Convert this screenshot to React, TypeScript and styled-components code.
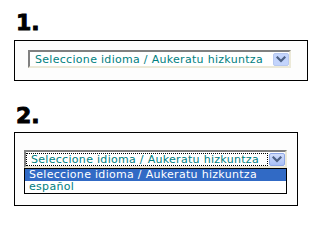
import React from 'react';
import styled, { createGlobalStyle } from 'styled-components';

const GlobalStyle = createGlobalStyle`
  body {
    margin: 0;
    background: #ffffff;
    font-family: 'DejaVu Sans', Verdana, sans-serif;
  }
`;

const Page = styled.main`
  padding: 12px 0 0 14px;
`;

const StepTitle = styled.h2<{ $first?: boolean }>`
  margin: ${(p) => (p.$first ? '0' : '24px')} 0 ${(p) => (p.$first ? '6px' : '5px')} 2px;
  font-size: 22px;
  line-height: 22px;
  font-weight: 700;
  color: #000000;
  -webkit-text-stroke: 0.9px #000000;
`;

const Frame = styled.section<{ $width: number; $padding: string }>`
  box-sizing: border-box;
  width: ${(p) => p.$width}px;
  padding: ${(p) => p.$padding};
  border: 1px solid #000000;
  background: #fdfdfd;
`;

const SelectBox = styled.div`
  box-sizing: border-box;
  display: flex;
  align-items: center;
  width: 263px;
  height: 18px;
  border-top: 2px solid #808080;
  border-left: 2px solid #808080;
  border-right: 2px solid #ece9d8;
  border-bottom: 2px solid #ece9d8;
  background: #ffffff;
`;

const Value = styled.div<{ $focused?: boolean }>`
  box-sizing: border-box;
  flex: 1;
  height: 13px;
  padding-left: 4px;
  border: 1px dotted ${(p) => (p.$focused ? '#000000' : 'transparent')};
  font-size: 11px;
  line-height: 11px;
  letter-spacing: 0.3px;
  color: #008080;
  white-space: nowrap;
  overflow: hidden;
`;

const ArrowButton = styled.span<{ $hover?: boolean }>`
  box-sizing: border-box;
  display: flex;
  align-items: center;
  justify-content: center;
  width: 16px;
  height: 13px;
  margin: 0 0 0 1px;
  border: 1px solid ${(p) => (p.$hover ? '#8ea7e6' : '#b7c8f0')};
  border-radius: 2px;
  background: ${(p) =>
    p.$hover
      ? 'linear-gradient(180deg, #d2defc 0%, #a8bff7 100%)'
      : '#c3d4fc'};
`;

const OptionList = styled.ul`
  box-sizing: border-box;
  width: 263px;
  margin: 0;
  padding: 0;
  list-style: none;
  border: 1px solid #000000;
  background: #ffffff;
`;

const OptionItem = styled.li<{ $selected?: boolean }>`
  height: 12px;
  padding-left: 4px;
  font-size: 11px;
  line-height: 12px;
  letter-spacing: 0.3px;
  white-space: nowrap;
  color: ${(p) => (p.$selected ? '#ffffff' : '#008080')};
  background: ${(p) => (p.$selected ? '#316ac5' : 'transparent')};
`;

const Chevron = () => (
  <svg width="10" height="7" viewBox="0 0 10 7">
    <polyline
      points="1.5,1.5 5,5 8.5,1.5"
      fill="none"
      stroke="#4d6185"
      strokeWidth="2.2"
      strokeLinecap="square"
    />
  </svg>
);

const LABEL = 'Seleccione idioma / Aukeratu hizkuntza';

const LanguageSelect = ({ focused, hover }: { focused?: boolean; hover?: boolean }) => (
  <SelectBox>
    <Value $focused={focused}>{LABEL}</Value>
    <ArrowButton $hover={hover}>
      <Chevron />
    </ArrowButton>
  </SelectBox>
);

export default function App() {
  return (
    <>
      <GlobalStyle />
      <Page>
        <StepTitle $first>1.</StepTitle>
        <Frame $width={294} $padding="9px 0 12px 13px">
          <LanguageSelect />
        </Frame>

        <StepTitle>2.</StepTitle>
        <Frame $width={284} $padding="17px 0 11px 9px">
          <LanguageSelect focused hover />
          <OptionList>
            <OptionItem $selected>{LABEL}</OptionItem>
            <OptionItem>español</OptionItem>
          </OptionList>
        </Frame>
      </Page>
    </>
  );
}
